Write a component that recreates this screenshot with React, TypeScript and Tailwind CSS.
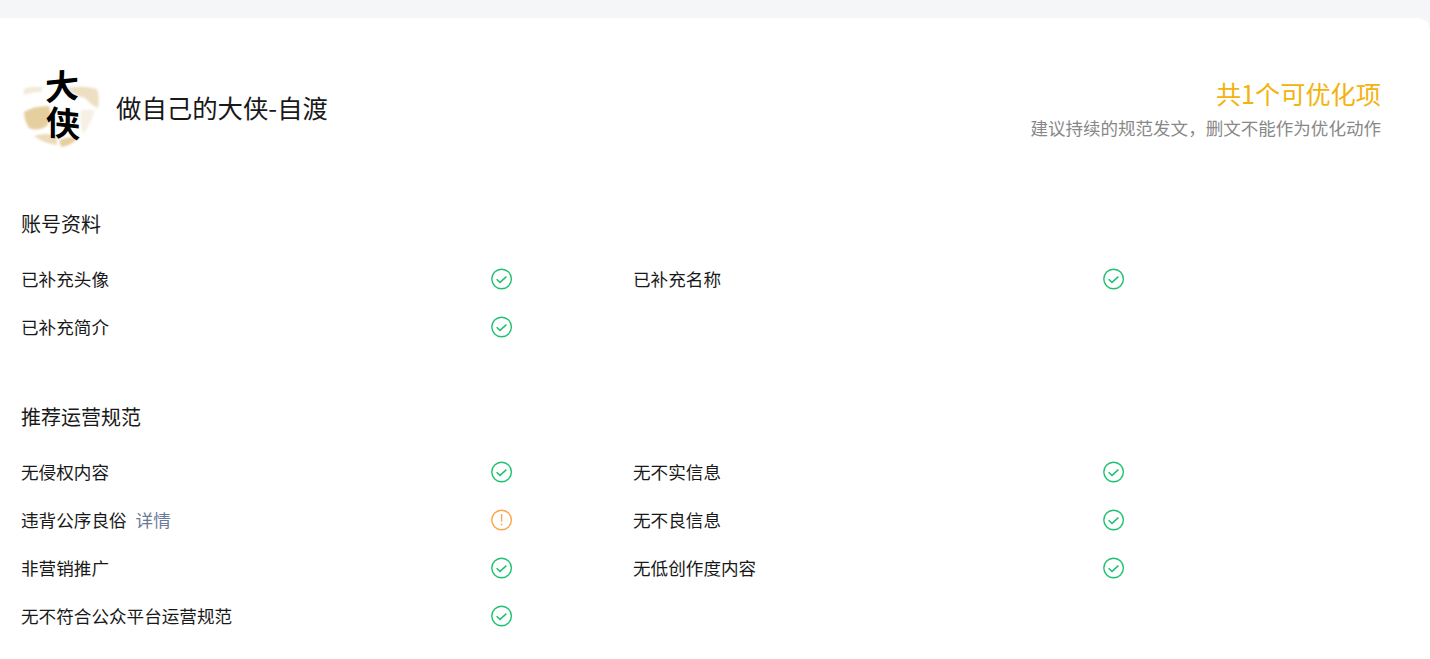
const font = { fontFamily: '"Noto Sans CJK SC", sans-serif' };

function Check() {
  return (
    <svg width="22" height="22" viewBox="0.4 0 22 22" fill="none" className="block">
      <circle cx="11" cy="11" r="9.8" stroke="#1fc271" strokeWidth="1.4" />
      <path d="M6 11.2 L9.4 14.4 L15.8 8.6" stroke="#1fc271" strokeWidth="1.5" fill="none" />
    </svg>
  );
}

function Warn() {
  return (
    <svg width="22" height="22" viewBox="0.4 0 22 22" fill="none" className="block">
      <circle cx="11" cy="11" r="9.8" stroke="#fba54c" strokeWidth="1.4" />
      <path d="M11 5 V12.6" stroke="#fba54c" strokeWidth="1.4" />
      <path d="M11 14.7 V16.3" stroke="#fba54c" strokeWidth="1.5" />
    </svg>
  );
}

function Avatar() {
  return (
    <div className="relative w-[80px] h-[80px] shrink-0">
      <svg width="80" height="80" viewBox="0 0 80 80" className="absolute inset-0">
        <defs>
          <filter id="soft" x="-10%" y="-10%" width="120%" height="120%">
            <feGaussianBlur stdDeviation="0.9" />
          </filter>
        </defs>
        <g filter="url(#soft)">
          <path d="M3 21 Q10 18 22 19 L20 24 Q10 24 3 27Z" fill="#f3ead8" />
          <path d="M46 20 Q62 17 76 21 Q79 30 77 40 Q70 37 64 30 Q54 28 46 20Z" fill="#eddfc2" />
          <path d="M3 44 Q12 38 28 38 L30 48 L26 58 Q16 64 8 60 Q3 52 3 44Z" fill="#e5cf9f" />
          <path d="M13 68 Q24 64 36 68 L36 77 Q24 76 13 68Z" fill="#ecdcba" />
          <path d="M38 72 Q48 68 57 70 Q50 78 40 79Z" fill="#e5cf9f" />
          <path d="M60 42 Q68 42 74 42 Q70 56 62 66 Q58 54 60 42Z" fill="#f6f0e4" />
        </g>
      </svg>
      <div className="absolute inset-0 flex flex-col items-center text-black font-bold text-[34px] leading-[37px] -translate-y-[2px]" style={font}>
        <span className="-skew-y-6 translate-x-[1px]">大</span>
        <span className="skew-y-6 translate-x-[2px]">侠</span>
      </div>
    </div>
  );
}

function Row({ label, warn, detail }: { label: string; warn?: boolean; detail?: boolean }) {
  return (
    <div className="h-12 flex items-center">
      <div className="w-[470px] flex items-center text-[17.6px] text-[#191919]">
        <span>{label}</span>
        {detail && <span className="ml-[9px] text-[#6b7a99]">详情</span>}
      </div>
      {warn ? <Warn /> : <Check />}
    </div>
  );
}

export default function App() {
  return (
    <div className="bg-[#f5f6f8] pt-[18px] h-[659px] overflow-hidden" style={font}>
      <div className="bg-white rounded-tr-xl h-full pl-[21px] pr-[49px]">
        <div className="flex items-center justify-between pt-[50px]">
          <div className="flex items-center gap-[15px]">
            <Avatar />
            <div className="text-[25.4px] text-[#191919] -mt-[2px]">做自己的大侠-自渡</div>
          </div>
          <div className="text-right">
            <div className="text-[25.2px] leading-[37px] text-[#f4b30c] -mt-[1px]">共1个可优化项</div>
            <div className="text-[17.55px] leading-[24px] text-[#888888] mt-[4px]">建议持续的规范发文，删文不能作为优化动作</div>
          </div>
        </div>

        <h2 className="text-[20px] leading-[30px] text-[#191919] mt-[61px] mb-[16px]">账号资料</h2>
        <div className="grid grid-cols-[612px_612px]">
          <Row label="已补充头像" />
          <Row label="已补充名称" />
          <Row label="已补充简介" />
        </div>

        <h2 className="text-[20px] leading-[30px] text-[#191919] mt-[51px] mb-[16px]">推荐运营规范</h2>
        <div className="grid grid-cols-[612px_612px]">
          <Row label="无侵权内容" />
          <Row label="无不实信息" />
          <Row label="违背公序良俗" warn detail />
          <Row label="无不良信息" />
          <Row label="非营销推广" />
          <Row label="无低创作度内容" />
          <Row label="无不符合公众平台运营规范" />
        </div>
      </div>
    </div>
  );
}
